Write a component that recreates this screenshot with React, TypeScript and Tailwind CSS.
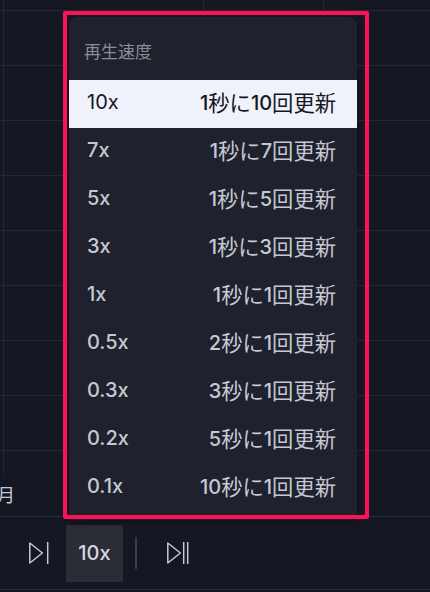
const speeds = [
  { label: '10x', desc: '1秒に10回更新' },
  { label: '7x', desc: '1秒に7回更新' },
  { label: '5x', desc: '1秒に5回更新' },
  { label: '3x', desc: '1秒に3回更新' },
  { label: '1x', desc: '1秒に1回更新' },
  { label: '0.5x', desc: '2秒に1回更新' },
  { label: '0.3x', desc: '3秒に1回更新' },
  { label: '0.2x', desc: '5秒に1回更新' },
  { label: '0.1x', desc: '10秒に1回更新' },
];

const gridRows = [10, 65, 120, 175, 230, 285, 340, 395, 450];

function ChartGrid() {
  return (
    <svg className="absolute left-0 top-0" width="430" height="516">
      {gridRows.map((y) => (
        <line key={y} x1="0" x2="430" y1={y + 0.5} y2={y + 0.5} stroke="#262833" />
      ))}
      <line x1="3.5" x2="3.5" y1="0" y2="474" stroke="#262833" />
      <line x1="203.5" x2="203.5" y1="0" y2="474" stroke="#262833" />
      <line x1="323.5" x2="323.5" y1="0" y2="474" stroke="#262833" />
    </svg>
  );
}

function StepIcon({ double }: { double?: boolean }) {
  return (
    <svg width="24" height="24" viewBox="0 0 24 24" fill="none" stroke="#c5c8d3" strokeWidth="1.5" strokeLinejoin="round">
      <path d="M2.8 2v20l12.6-10z" />
      {double ? (
        <>
          <path d="M18.7 1v22" />
          <path d="M22.7 1v22" />
        </>
      ) : (
        <path d="M20.7 1v22" />
      )}
    </svg>
  );
}

// digits sit at 20px, the kanji run a little larger in the reference
function Desc({ text }: { text: string }) {
  const parts = text.split(/(\d+)/).filter(Boolean);
  return (
    <span className="flex -translate-y-px items-center leading-6">
      {parts.map((p, i) =>
        /\d/.test(p) ? (
          <span key={i} className="text-[20px] font-medium">{p}</span>
        ) : (
          <span key={i} className="text-[21.3px]">{p}</span>
        )
      )}
    </span>
  );
}

export default function App() {
  return (
    <div
      className="relative h-[592px] w-[430px] overflow-hidden bg-[#151722]"
      style={{ fontFamily: 'Inter, "Noto Sans CJK JP", sans-serif' }}
    >
      <div className="relative h-[517px] border-b border-[#2a2c37]">
        <ChartGrid />
        <span className="absolute left-[-3px] top-[484px] text-lg leading-6 text-[#c5c8d3]">月</span>
      </div>

      <div className="flex h-[73px] items-center border-b border-[#2a2c37] pl-[27px]">
        <StepIcon />
        <div className="ml-[15px] flex h-[57px] w-[57px] items-center justify-center bg-[#2a2c36] text-[20px] font-medium text-[#d5d8e2]">
          10x
        </div>
        <div className="ml-3 h-8 w-0.5 bg-[#3b3d49]" />
        <div className="ml-[28px]">
          <StepIcon double />
        </div>
      </div>

      <div className="absolute left-[69px] top-[17px] w-[288px] rounded-lg bg-[#1f212d] pb-2 shadow-[0_2px_8px_rgba(0,0,0,0.3)]">
        <div className="flex h-[63px] items-center px-[15px] pt-[8px] text-[17px] text-[#8a8c97]">再生速度</div>
        {speeds.map((s, i) => (
          <div
            key={s.label}
            className={`flex h-12 items-center justify-between pl-[18px] pr-[21px] ${
              i === 0 ? 'bg-[#eff2fa] text-[#16171f]' : 'text-[#c5c8d3]'
            }`}
          >
            <span className={`-translate-y-[2px] text-[20px] ${i === 0 ? 'font-normal' : 'font-medium'}`}>{s.label}</span>
            <Desc text={s.desc} />
          </div>
        ))}
      </div>

      <div className="absolute left-[63px] top-[11px] h-[508px] w-[306px] rounded-[2px] border-4 border-[#ff1158]" />
    </div>
  );
}
